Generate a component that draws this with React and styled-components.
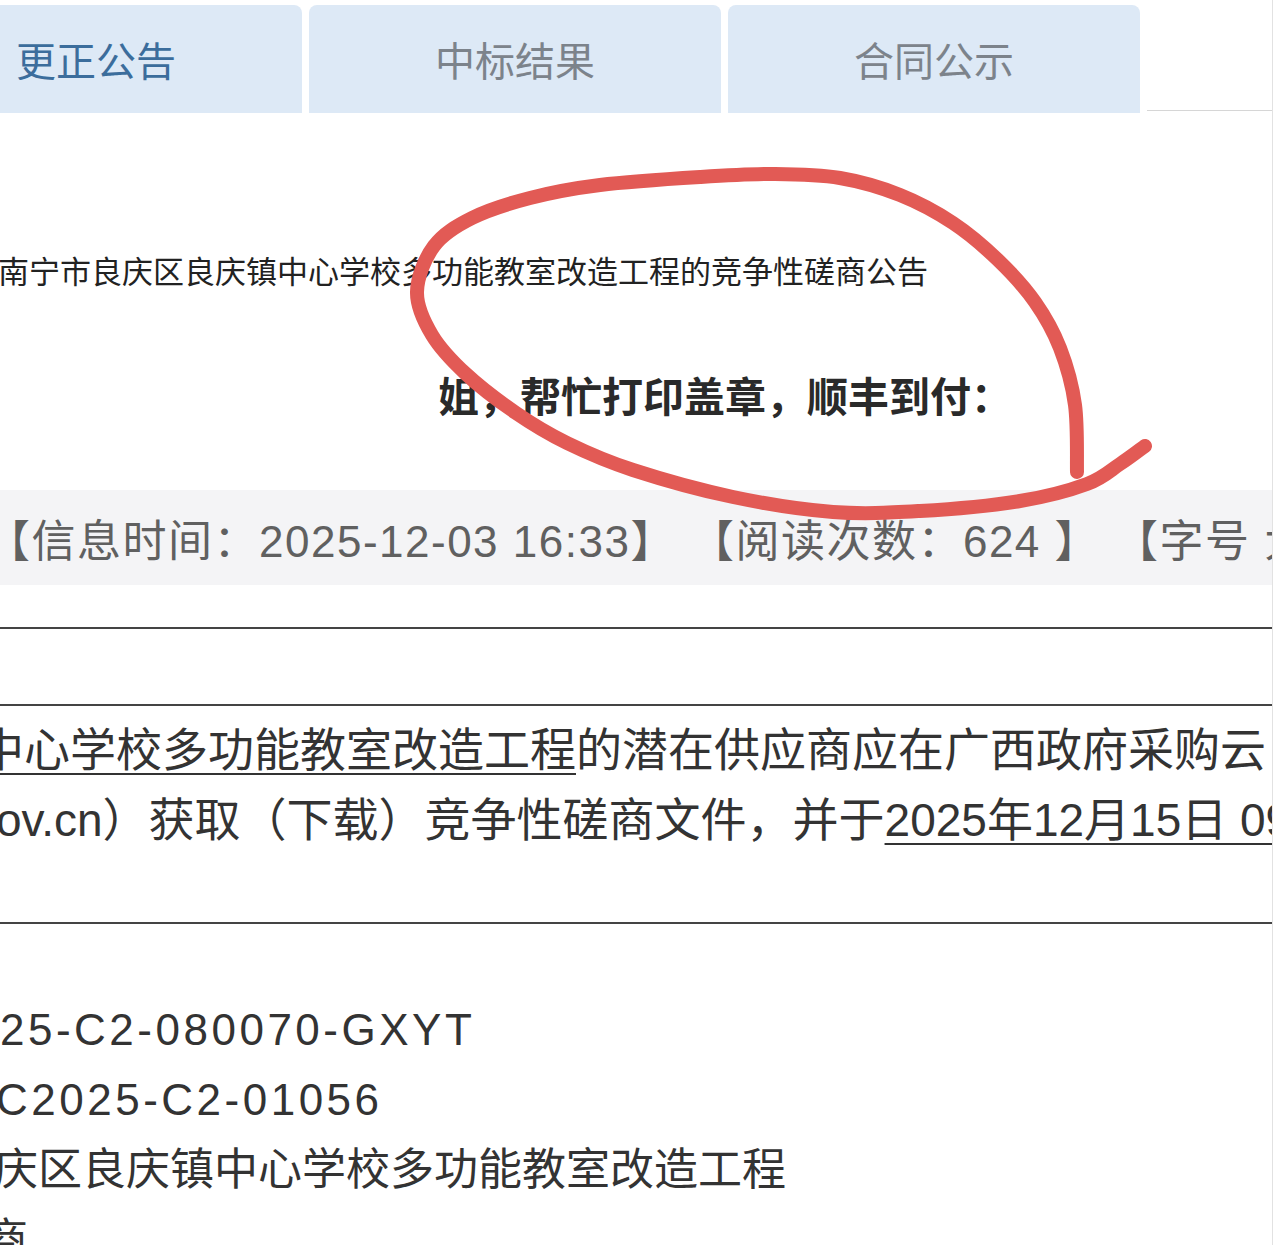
import styled, { createGlobalStyle } from 'styled-components';

const GlobalStyle = createGlobalStyle`
  html, body {
    margin: 0;
    padding: 0;
    background: #fff;
  }
  body {
    font-family: "Liberation Sans", "Noto Sans CJK SC", sans-serif;
  }
`;

// hand drawn red loop, traced from the screenshot
const loop = [
  [1077, 472], [1075, 405], [1060, 348], [1035, 302], [998, 260], [953, 223],
  [900, 195], [840, 178], [775, 174], [700, 177], [600, 185], [530, 198],
  [472, 218], [434, 246], [417, 292], [432, 335], [466, 374], [516, 413],
  [567, 443], [633, 470], [733, 497], [833, 512], [920, 511], [1020, 501],
  [1087, 484], [1120, 464], [1145, 446],
];

function smoothPath(points) {
  let d = `M${points[0][0]},${points[0][1]}`;
  for (let i = 0; i < points.length - 1; i++) {
    const p0 = points[i - 1] || points[i];
    const p1 = points[i];
    const p2 = points[i + 1];
    const p3 = points[i + 2] || p2;
    const c1 = [p1[0] + (p2[0] - p0[0]) / 6, p1[1] + (p2[1] - p0[1]) / 6];
    const c2 = [p2[0] - (p3[0] - p1[0]) / 6, p2[1] - (p3[1] - p1[1]) / 6];
    d += ` C${c1[0].toFixed(1)},${c1[1].toFixed(1)} ${c2[0].toFixed(1)},${c2[1].toFixed(1)} ${p2[0]},${p2[1]}`;
  }
  return d;
}

const tabs = ['更正公告', '中标结果', '合同公示'];

export default function App() {
  return (
    <Screen>
      <GlobalStyle />
      <Viewport>
        <TabRow>
          {tabs.map((t, i) => (
            <Tab key={t} $active={i === 0}>{t}</Tab>
          ))}
          <TabFiller />
        </TabRow>

        <Title>南宁市良庆区良庆镇中心学校多功能教室改造工程的竞争性磋商公告</Title>
        <Notice>姐，帮忙打印盖章，顺丰到付：</Notice>

        <InfoBar>
          <Meta>【信息时间：2025-12-03 16:33】</Meta>
          <Meta>【阅读次数：624 】</Meta>
          <Meta>【字号 大 中 小】</Meta>
        </InfoBar>

        <Rule />

        <Table>
          <Row $shift={-22}>
            <Link>中心学校多功能教室改造工程</Link>的潜在供应商应在广西政府采购云
          </Row>
          <Row $shift={-4}>
            ov.cn）获取（下载）竞争性磋商文件，并于<Link>2025年12月15日 09:30</Link>
          </Row>
        </Table>

        <Details>
          <Line $shift={0} $track={3.5}>25-C2-080070-GXYT</Line>
          <Line $shift={-4} $track={3.5}>C2025-C2-01056</Line>
          <Line $shift={-6}>庆区良庆镇中心学校多功能教室改造工程</Line>
          <Line $shift={-16}>商</Line>
        </Details>
      </Viewport>

      <Scribble viewBox="0 0 1280 1245">
        <path
          d={smoothPath(loop)}
          fill="none"
          stroke="#e25a55"
          strokeWidth="14"
          strokeLinecap="round"
          strokeLinejoin="round"
        />
      </Scribble>
    </Screen>
  );
}

const Screen = styled.div`
  position: relative;
  width: 1280px;
  height: 1245px;
  overflow: hidden;
  background: #fff;
`;

const Viewport = styled.div`
  width: 1272px;
  height: 100%;
  overflow: hidden;
  border-right: 1px solid #e2e2e2;
  color: #333;
`;

const TabRow = styled.div`
  display: flex;
  gap: 7px;
  margin-left: -110px;
  padding-top: 5px;
  height: 108px;
`;

const Tab = styled.div`
  flex: none;
  width: 412px;
  height: 108px;
  display: flex;
  align-items: center;
  justify-content: center;
  background: #dde9f6;
  border-radius: 8px 8px 0 0;
  font-size: 40px;
  color: ${(p) => (p.$active ? '#3b6d9c' : '#7c838b')};
`;

const TabFiller = styled.div`
  flex: 1;
  height: 105px;
  border-bottom: 1px solid #d6d6d6;
`;

const Title = styled.div`
  margin-top: 140px;
  margin-left: -2px;
  font-size: 31px;
  line-height: 40px;
  color: #222;
  white-space: nowrap;
`;

const Notice = styled.div`
  margin-top: 80px;
  padding-left: 438px;
  font-size: 41px;
  font-weight: 700;
  line-height: 50px;
  color: #2a2a2a;
  white-space: nowrap;
`;

const InfoBar = styled.div`
  margin-top: 67px;
  height: 95px;
  display: flex;
  align-items: center;
  gap: 14px;
  margin-left: -14px;
  background: #f4f4f6;
  font-size: 44px;
  letter-spacing: 1.5px;
  color: #606060;
  white-space: nowrap;
`;

const Meta = styled.span`
  flex: none;
`;

const Rule = styled.div`
  margin-top: 42px;
  border-top: 2px solid #444;
`;

const Table = styled.div`
  margin-top: 75px;
  padding: 9px 0 67px;
  border-top: 2px solid #444;
  border-bottom: 2px solid #444;
`;

const Row = styled.div`
  margin-left: ${(p) => p.$shift}px;
  font-size: 46px;
  line-height: 70px;
  color: #333;
  white-space: nowrap;
`;

const Link = styled.span`
  text-decoration: underline;
  text-decoration-thickness: 2px;
  text-underline-offset: 7px;
`;

const Details = styled.div`
  margin-top: 71px;
`;

const Line = styled.div`
  margin-left: ${(p) => p.$shift}px;
  font-size: 44px;
  line-height: 70px;
  letter-spacing: ${(p) => p.$track || 0}px;
  color: #333;
  white-space: nowrap;
`;

const Scribble = styled.svg`
  position: absolute;
  inset: 0;
  width: 1280px;
  height: 1245px;
  pointer-events: none;
`;
